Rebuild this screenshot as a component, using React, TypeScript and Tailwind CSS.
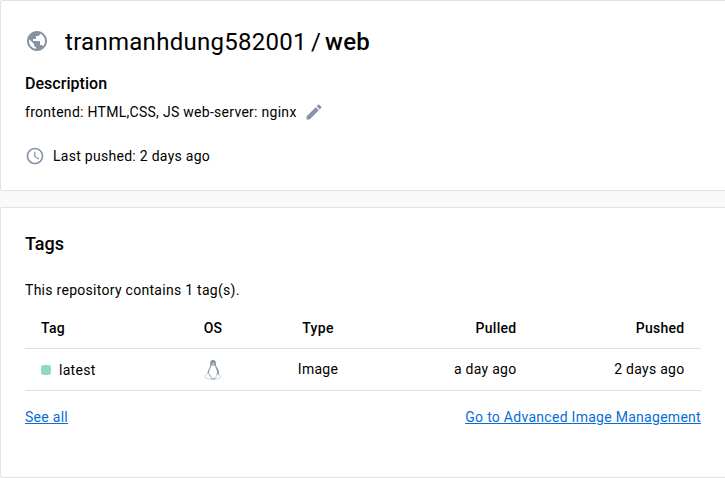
import { MdPublic, MdEdit, MdAccessTime } from "react-icons/md";

function Penguin() {
  return (
    <svg width="18" height="22" viewBox="0 0 18 22" fill="none">
      <path d="M6.2 4.600C6 2.300 7 .9 9 .9s3 1.500 2.900 3.500c-.1 2.600.9 3.700 2 5.600 1 1.900 1.400 3.400 1 5.200l-1.600.2c.2-2-.2-3.600-1-5.200-.6-1.300-1.100-2.700-1.500-4.200L9 7.100 7.500 6C7.100 7.700 6.400 9 5.700 10.400c-.7 1.500-.8 2.600-.8 4.300l-1.400-.3c0-1.800.7-3.200 1.600-4.800 1-1.700 1.200-3 1.100-5Z" fill="#8494a0" />
      <path d="M7.500 4.700 9 4.200l1.500.5L9 6Z" fill="#dce1e5" />
      <path d="M4.700 14.500l2.500 3.700M12.900 14.700l-.6 3.800M6.700 19.500c1.700.7 3.400.6 4.900-.3" stroke="#8494a0" strokeWidth="1.100" />
      <path d="M3.600 14.300c-.5.900-1 1.300-2 1.500.1 1.400-.7 2.400-.2 3l3 1.100c1.500.5 2.500-.2 2.300-1.500L4.900 15.200c-.4-.5-.8-.9-1.300-.9ZM12.700 15c-.5 1-.7 2.400-.8 3.700-.1 1.300 1 1.800 2.100 1.200 1-.7 1.700-1.500 3-2.100-.9-.7-1.200-1.300-1.500-2.300-.7 1-2.300.9-2.800-.5Z" fill="white" stroke="#c5ccd2" strokeWidth="0.800" />
    </svg>
  );
}

const cell = "px-4 py-0 align-middle";
const rightCell = "pl-4 pr-[16.5px] py-0 align-middle text-right";

export default function App() {
  return (
    <main className="h-[478px] w-[725px] overflow-hidden bg-[#f9f9fa] font-[Roboto,sans-serif] text-sm leading-5 tracking-[0.28px] text-black">
      <section className="h-[191px] w-[741px] rounded-xs border border-[#e1e2e6] bg-white px-6 pt-6">
        <h1 className="flex h-8 items-center text-2xl leading-8">
          <MdPublic size={24} color="#8393a0" className="mr-4" />
          <span className="flex pt-0.5">
            <span>tranmanhdung582001</span>
            <span className="mx-1">/</span>
            <span className="font-medium">web</span>
          </span>
        </h1>
        <h2 className="mt-[15px] text-base font-medium leading-6 tracking-[0.04px]">Description</h2>
        <div className="mt-1 flex h-6 items-center">
          <span>frontend: HTML,CSS, JS web-server: nginx</span>
          <MdEdit size={20} color="#8993a8" className="ml-[7px]" />
        </div>
        <div className="mt-5 flex h-6 items-center gap-2">
          <MdAccessTime size={20} color="#8993a8" />
          <span>Last pushed: 2 days ago</span>
        </div>
      </section>
      <section className="mt-4 h-[271px] w-[741px] rounded-xs border border-[#e1e2e6] bg-white px-6 pt-6">
        <div className="w-[676px]">
          <h2 className="text-lg font-medium leading-6 tracking-normal">Tags</h2>
          <p className="mt-6">This repository contains 1 tag(s).</p>
          <table className="mt-2 w-full table-fixed border-collapse">
            <thead>
              <tr className="h-10 border-b border-[#e0e0e0] text-left">
                <th className={cell + " w-[143px] font-medium"}>Tag</th>
                <th className={cell + " w-[90px] text-center font-medium"}>OS</th>
                <th className={cell + " w-[120px] text-center font-medium"}>Type</th>
                <th className={rightCell + " font-medium"}>Pulled</th>
                <th className={rightCell + " w-[168px] font-medium"}>Pushed</th>
              </tr>
            </thead>
            <tbody>
              <tr className="h-[42px] border-b border-[#e0e0e0]">
                <td className={cell}><div className="flex items-center gap-2 pt-0.5"><span className="size-[10px] rounded-[3px] bg-[#8bdac1]" />latest</div></td>
                <td className={cell}><div className="flex justify-center pt-0.5"><Penguin /></div></td>
                <td className={cell + " text-center"}>Image</td>
                <td className={rightCell}>a day ago</td>
                <td className={rightCell}>2 days ago</td>
              </tr>
            </tbody>
          </table>
          <div className="mt-4 flex justify-between text-[#086dd7] underline">
            <a>See all</a><a>Go to Advanced Image Management</a>
          </div>
        </div>
      </section>
    </main>
  );
}
